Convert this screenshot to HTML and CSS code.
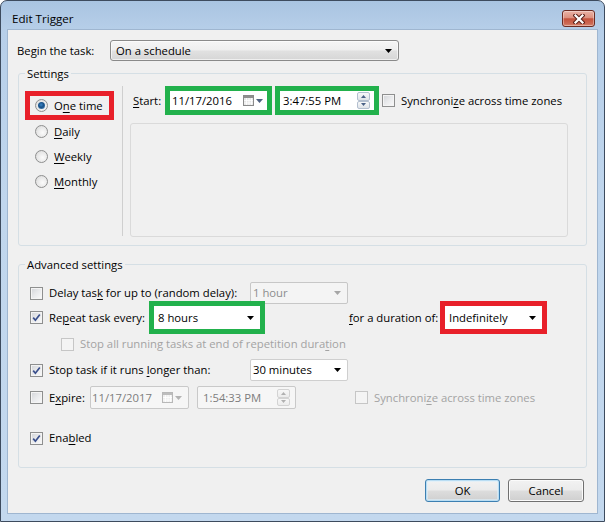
FILE: index.html
```html
<!DOCTYPE html>
<html>
<head>
<meta charset="utf-8">
<title>Edit Trigger</title>
<link rel="stylesheet" href="styles.css">
</head>
<body>
<div class="window">
  <div class="titlebar">
    <span class="title">Edit Trigger</span>
    <div class="close">
      <svg width="12" height="10" viewBox="0 0 12 10"><path d="M2.5 1.5L9.5 8.5M9.5 1.5L2.5 8.5" stroke="#5a2018" stroke-width="4.2" stroke-linecap="square"/><path d="M2.5 1.5L9.5 8.5M9.5 1.5L2.5 8.5" stroke="#ffffff" stroke-width="2.2" stroke-linecap="square"/></svg>
    </div>
  </div>
  <div class="client">
    <div class="begin-row">
      <span class="begin-label">Begin the task:</span>
      <div class="combo combo-btn begin-combo">
        <span class="combo-text">On a schedule</span>
        <svg class="arrow" width="7" height="4" viewBox="0 0 7 4"><path d="M0 0H7L3.5 4Z" fill="#000"/></svg>
      </div>
    </div>

    <div class="group settings">
      <div class="group-title">Settings</div>
      <div class="settings-body">
        <div class="radios">
          <div class="hl hl-red radio-hl">
            <div class="radio-row"><span class="radio checked"><span class="dot"></span></span><span>O<u>n</u>e time</span></div>
          </div>
          <div class="radio-row first"><span class="radio"></span><span><u>D</u>aily</span></div>
          <div class="radio-row"><span class="radio"></span><span><u>W</u>eekly</span></div>
          <div class="radio-row"><span class="radio"></span><span><u>M</u>onthly</span></div>
        </div>
        <div class="vsep"></div>
        <div class="right-col">
          <div class="start-row">
            <span class="start-label"><u>S</u>tart:</span>
            <div class="hl hl-green date-hl">
              <div class="field date-field">
                <span class="ftext">11/17/2016</span>
                <svg class="cal" width="11" height="11" viewBox="0 0 11 11"><rect x="0.5" y="0.5" width="10" height="10" fill="#e6e6e6" stroke="#8a8a8a"/><rect x="1" y="1" width="9" height="2" fill="#8f8f8f"/><path d="M1 5.5H10M1 8H10M3.5 3V10M6 3V10M8.5 3V10" stroke="#ffffff" stroke-width="0.8"/></svg>
                <svg class="darrow" width="7" height="4" viewBox="0 0 7 4"><path d="M0 0H7L3.5 4Z" fill="#4f6180"/></svg>
              </div>
            </div>
            <div class="hl hl-green time-hl">
              <div class="field time-field">
                <span class="ftext">3:47:55 PM</span>
                <div class="spin">
                  <span class="sb"><svg width="5" height="3" viewBox="0 0 5 3"><path d="M0 3H5L2.5 0Z" fill="#4a6186"/></svg></span>
                  <span class="sb"><svg width="5" height="3" viewBox="0 0 5 3"><path d="M0 0H5L2.5 3Z" fill="#4a6186"/></svg></span>
                </div>
              </div>
            </div>
            <span class="check sync-check"></span>
            <span class="check-label">Synchroni<u>z</u>e across time zones</span>
          </div>
          <div class="panel"></div>
        </div>
      </div>
    </div>

    <div class="group advanced">
      <div class="group-title">Advanced settings</div>
      <div class="adv-rows">
        <div class="adv-row r-delay">
          <div class="cell w220"><span class="check"></span><span class="lbl">Delay tas<u>k</u> for up to (random delay):</span></div>
          <div class="combo combo-dis w98">
            <span class="combo-text">1 hour</span>
            <svg class="arrow" width="7" height="4" viewBox="0 0 7 4"><path d="M0 0H7L3.5 4Z" fill="#a6a6a6"/></svg>
          </div>
        </div>
        <div class="adv-row r-repeat">
          <div class="cell w119"><span class="check checked"><svg width="9" height="9" viewBox="0 0 9 9"><path d="M1.2 4.6L3.4 7.2L7.8 1.4" fill="none" stroke="#3a4f8c" stroke-width="1.7"/></svg></span><span class="lbl">Re<u>p</u>eat task every:</span></div>
          <div class="hl hl-green rep-hl">
            <div class="combo combo-inner">
              <span class="combo-text">8 hours</span>
              <svg class="arrow" width="7" height="4" viewBox="0 0 7 4"><path d="M0 0H7L3.5 4Z" fill="#000"/></svg>
            </div>
          </div>
          <span class="dur-label"><u>f</u>or a duration of:</span>
          <div class="hl hl-red dur-hl">
            <div class="combo combo-inner">
              <span class="combo-text">Indefinitely</span>
              <svg class="arrow" width="7" height="4" viewBox="0 0 7 4"><path d="M0 0H7L3.5 4Z" fill="#000"/></svg>
            </div>
          </div>
        </div>
        <div class="adv-row r-stopall">
          <span class="check check-dis"></span><span class="lbl dis">Stop all running tasks at end of repetition dura<u>t</u>ion</span>
        </div>
        <div class="adv-row r-stop">
          <div class="cell w220"><span class="check checked"><svg width="9" height="9" viewBox="0 0 9 9"><path d="M1.2 4.6L3.4 7.2L7.8 1.4" fill="none" stroke="#3a4f8c" stroke-width="1.7"/></svg></span><span class="lbl">Stop task if it runs <u>l</u>onger than:</span></div>
          <div class="combo combo-white w98">
            <span class="combo-text">30 minutes</span>
            <svg class="arrow" width="7" height="4" viewBox="0 0 7 4"><path d="M0 0H7L3.5 4Z" fill="#000"/></svg>
          </div>
        </div>
        <div class="adv-row r-expire">
          <div class="cell w60"><span class="check"></span><span class="lbl">E<u>x</u>pire:</span></div>
          <div class="field field-dis exp-date">
            <span class="ftext">11/17/2017</span>
            <svg class="cal" width="11" height="11" viewBox="0 0 11 11"><rect x="0.5" y="0.5" width="10" height="10" fill="#eeeeee" stroke="#b8b8b8"/><rect x="1" y="1" width="9" height="2" fill="#bdbdbd"/><path d="M1 5.5H10M1 8H10M3.5 3V10M6 3V10M8.5 3V10" stroke="#ffffff" stroke-width="0.8"/></svg>
            <svg class="darrow" width="7" height="4" viewBox="0 0 7 4"><path d="M0 0H7L3.5 4Z" fill="#b3b3b3"/></svg>
          </div>
          <div class="field field-dis exp-time">
            <span class="ftext">1:54:33 PM</span>
            <div class="spin spin-dis">
              <span class="sb"><svg width="5" height="3" viewBox="0 0 5 3"><path d="M0 3H5L2.5 0Z" fill="#b0b0b0"/></svg></span>
              <span class="sb"><svg width="5" height="3" viewBox="0 0 5 3"><path d="M0 0H5L2.5 3Z" fill="#b0b0b0"/></svg></span>
            </div>
          </div>
          <span class="check check-dis exp-sync"></span>
          <span class="lbl dis">Synchroni<u>z</u>e across time zones</span>
        </div>
        <div class="adv-row r-enabled">
          <span class="check checked"><svg width="9" height="9" viewBox="0 0 9 9"><path d="M1.2 4.6L3.4 7.2L7.8 1.4" fill="none" stroke="#3a4f8c" stroke-width="1.7"/></svg></span><span class="lbl">Ena<u>b</u>led</span>
        </div>
      </div>
    </div>

    <div class="buttons">
      <div class="btn btn-default">OK</div>
      <div class="btn btn-cancel">Cancel</div>
    </div>
  </div>
</div>
</body>
</html>
```

FILE: styles.css
```css
* { box-sizing: border-box; }
html, body { margin: 0; padding: 0; }
body {
  width: 605px;
  height: 522px;
  overflow: hidden;
  background: #ffffff;
  font-family: "Open Sans", "Noto Sans", sans-serif;
  font-size: 11.3px;
  line-height: 16px;
  color: #000;
}
u { text-decoration: underline; text-underline-offset: 2px; }

.window {
  width: 605px;
  height: 522px;
  border: 1px solid #3d4b5e;
  border-radius: 7px 7px 0 0;
  background: linear-gradient(to bottom, #a9c4e1 0px, #b7cfe9 30px, #c0d6ed 200px, #c3d8ee 100%);
  padding: 0 7px 8px 7px;
  display: flex;
  flex-direction: column;
}

.titlebar {
  height: 29px;
  display: flex;
  justify-content: space-between;
  align-items: flex-start;
  flex: none;
}
.title {
  margin-top: 10px;
  margin-left: 4px;
  line-height: 16px;
  font-size: 11.6px;
  color: #000;
}
.close {
  margin-top: 9px;
  margin-right: 2px;
  width: 33px;
  height: 17px;
  border: 1px solid #6b2b22;
  border-radius: 3px;
  background: linear-gradient(to bottom, #eab3a6 0%, #dc907f 45%, #c4523c 52%, #cc6a55 85%, #d98a72 100%);
  box-shadow: inset 0 0 0 1px rgba(255, 255, 255, 0.35);
  display: flex;
  align-items: center;
  justify-content: center;
}

.client {
  flex: 1;
  background: #f0f0f0;
  outline: 1px solid #9fb6d0;
  display: flex;
  flex-direction: column;
}

/* begin row */
.begin-row {
  margin-top: 10px;
  height: 21px;
  padding-left: 9px;
  display: flex;
  align-items: center;
}
.begin-label { width: 93px; }
.begin-combo { width: 289px; height: 21px; }

/* combos */
.combo {
  display: flex;
  align-items: center;
  padding-left: 5px;
  padding-right: 6px;
}
.combo-text { flex: 1; white-space: nowrap; }
.combo-btn {
  border: 1px solid #8a8a8a;
  border-radius: 3px;
  background: linear-gradient(to bottom, #f5f5f5 0%, #eeeeee 48%, #e1e1e1 52%, #d6d6d6 100%);
  box-shadow: inset 0 0 0 1px rgba(255, 255, 255, 0.6);
  padding-left: 5px;
  padding-right: 6px;
}
.combo-inner {
  flex: 1;
  background: #fff;
  padding-left: 4px;
  padding-right: 6px;
}
.combo-white {
  background: #fff;
  border: 1px solid #cfcfcf;
  border-radius: 2px;
  padding-left: 2px;
  padding-right: 6px;
  height: 22px;
}
.combo-dis {
  background: #f4f4f4;
  border: 1px solid #c7c7c7;
  border-radius: 2px;
  padding-left: 2px;
  padding-right: 6px;
  height: 22px;
  color: #8d8d8d;
}
.w98 { width: 98px; }

/* highlight boxes */
.hl { display: flex; flex: none; border: 5px solid; }
.hl-red { border-color: #e8202a; }
.hl-green { border-color: #22b14c; }

/* group boxes */
.group {
  margin: 0 10px;
  border: 1px solid #d5dfe5;
  border-radius: 3px;
  flex: none;
}
.group-title {
  margin: -8px 0 0 6px;
  padding: 0 2px;
  width: fit-content;
  line-height: 15px;
  background: #f0f0f0;
}
.settings { margin-top: 12px; height: 173px; }
.advanced { margin-top: 18px; height: 204px; }

.settings-body {
  margin-top: 5px;
  display: flex;
}
.radios {
  width: 103px;
  padding-left: 6px;
}
.radio-hl {
  margin-top: 5px;
  width: 89px;
  height: 29px;
}
.radio-row {
  display: flex;
  align-items: center;
  gap: 6px;
  height: 25px;
  padding-left: 10px;
}
.radio-hl .radio-row { height: 19px; padding-left: 5px; }
.radio-row.first { margin-top: -1px; }
.radio {
  width: 13px;
  height: 13px;
  border-radius: 50%;
  border: 1px solid #8e8f8f;
  background: radial-gradient(circle at 60% 60%, #fbfbfb 0%, #e8e8e8 55%, #d2d2d2 100%);
  display: flex;
  align-items: center;
  justify-content: center;
  flex: none;
}
.radio .dot {
  width: 7px;
  height: 7px;
  border-radius: 50%;
  background: radial-gradient(circle at 45% 40%, #3c86c6 0%, #174f86 45%, #5e98c8 100%);
}
.vsep {
  width: 1px;
  height: 150px;
  background: #cfcfcf;
  flex: none;
}
.right-col {
  margin-left: 7px;
  width: 438px;
}
.start-row {
  height: 29px;
  display: flex;
  align-items: center;
}
.start-label { width: 35px; padding-left: 3px; }
.date-hl { width: 107px; height: 29px; }
.time-hl { width: 104px; height: 29px; margin-left: 3px; }
.sync-check { margin-left: 3px; }
.check-label { margin-left: 6px; white-space: nowrap; }

.field {
  display: flex;
  align-items: center;
  background: #fff;
  flex: 1;
}
.ftext { white-space: nowrap; }
.date-field { padding-left: 2px; padding-right: 4px; }
.date-field .cal { margin-left: auto; }
.darrow { margin-left: 2px; }
.time-field { padding-left: 3px; padding-right: 4px; }
.time-field .spin { margin-left: auto; }

.spin {
  display: flex;
  flex-direction: column;
  width: 13px;
  height: 17px;
}
.sb {
  flex: 1;
  border: 1px solid #b3bfcf;
  border-radius: 2px;
  background: linear-gradient(to bottom, #f7f8f9, #dfe3e8);
  display: flex;
  align-items: center;
  justify-content: center;
}
.spin-dis .sb {
  border-color: #d3d3d3;
  background: linear-gradient(to bottom, #f7f7f7, #ececec);
}

.panel {
  margin-top: 8px;
  height: 114px;
  border: 1px solid #dadada;
  border-radius: 3px;
}

/* checkboxes */
.check {
  width: 13px;
  height: 13px;
  flex: none;
  border: 1px solid #8e8f8f;
  background: linear-gradient(135deg, #d2d4d8 0%, #e9eaec 50%, #fafafa 100%);
  box-shadow: inset 0 0 0 1px #f4f4f4;
  display: flex;
  align-items: center;
  justify-content: center;
}
.check-dis {
  border-color: #c6c6c6;
  background: #f4f4f4;
  box-shadow: none;
}
.lbl { margin-left: 6px; white-space: nowrap; }
.dis { color: #a3a3a3; }

/* advanced rows */
.adv-rows { padding-left: 11px; }
.adv-row { display: flex; align-items: center; }
.cell { display: flex; align-items: center; flex: none; }
.w220 { width: 220px; }
.w119 { width: 119px; }
.w60 { width: 60px; }

.r-delay { margin-top: 10px; height: 22px; }
.r-repeat { margin-top: -3px; height: 33px; }
.rep-hl { width: 116px; height: 33px; }
.dur-label { margin-left: 84px; width: 91px; white-space: nowrap; }
.dur-hl { width: 107px; height: 33px; }
.r-stopall { height: 20px; margin-left: 31px; }
.r-stop { margin-top: 5px; height: 22px; }
.r-expire { margin-top: 5px; height: 23px; }
.field-dis {
  flex: none;
  height: 23px;
  background: #f6f6f6;
  border: 1px solid #c9c9c9;
  border-radius: 2px;
  color: #7d7d7d;
}
.exp-date { width: 99px; padding-left: 1px; padding-right: 6px; }
.exp-date .cal { margin-left: auto; }
.exp-time { width: 99px; margin-left: 8px; padding-left: 5px; padding-right: 5px; }
.exp-time .spin { margin-left: auto; }
.exp-sync { margin-left: 59px; }
.r-enabled { margin-top: 18px; height: 22px; }

/* buttons */
.buttons {
  margin-top: 11px;
  padding-right: 13px;
  display: flex;
  justify-content: flex-end;
  gap: 8px;
}
.btn {
  height: 23px;
  border-radius: 3px;
  display: flex;
  align-items: center;
  justify-content: center;
  background: linear-gradient(to bottom, #f2f2f2 0%, #ebebeb 48%, #dddddd 52%, #cfcfcf 100%);
}
.btn-default {
  width: 75px;
  border: 1px solid #3c7fb1;
  box-shadow: inset 0 0 0 1px #b9ddf3, inset 0 0 0 2px rgba(220, 240, 252, 0.6);
}
.btn-cancel {
  width: 76px;
  border: 1px solid #707070;
  box-shadow: inset 0 0 0 1px #fbfbfb;
}
```
